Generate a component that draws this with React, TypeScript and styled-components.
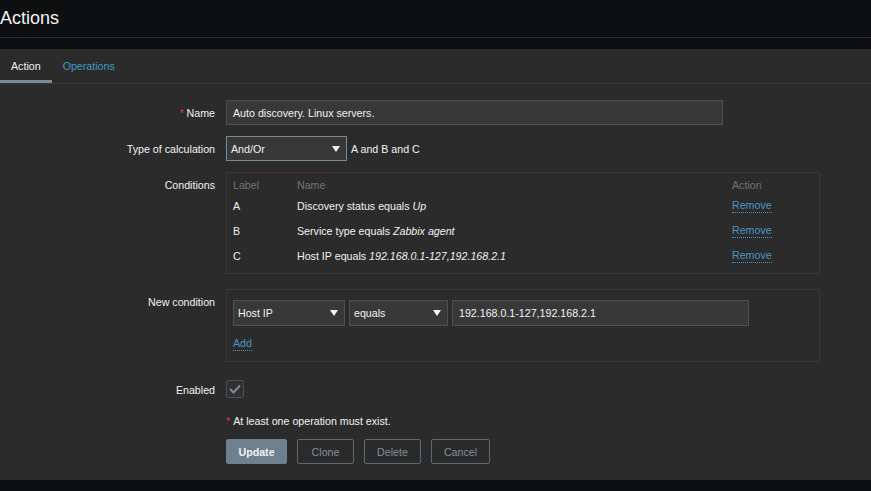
import React from 'react';
import styled, { createGlobalStyle } from 'styled-components';

const GlobalStyle = createGlobalStyle`
  html, body {
    margin: 0;
    padding: 0;
    background: #0e0f11;
  }
  body {
    font-family: "Liberation Sans", Arial, sans-serif;
    font-size: 10.67px;
    color: #f2f2f2;
  }
`;

const Page = styled.div`
  width: 871px;
  height: 491px;
  background: #0e0f11;
  display: flex;
  flex-direction: column;
  overflow: hidden;
`;

const Header = styled.header`
  height: 37px;
  border-bottom: 1px solid #2b2b2b;
  display: flex;
  align-items: center;
`;

const Title = styled.h1`
  margin: 0;
  font-size: 18px;
  font-weight: normal;
  color: #f2f2f2;
  line-height: 1;
  padding-bottom: 2px;
`;

const Panel = styled.main`
  margin-top: 11px;
  height: 431px;
  background: #2b2b2b;
`;

const TabBar = styled.nav`
  height: 34px;
  display: flex;
  border-bottom: 1px solid #383838;
`;

const Tab = styled.div<{ $active?: boolean }>`
  padding: 0 11px;
  display: flex;
  align-items: center;
  color: ${(p) => (p.$active ? '#f2f2f2' : '#4796c4')};
  border-bottom: 3px solid ${(p) => (p.$active ? '#768d99' : 'transparent')};
  height: 29px;
  padding-top: 2px;
`;

const Form = styled.div`
  padding-top: 16px;
`;

const Row = styled.div<{ $mt?: number }>`
  display: grid;
  grid-template-columns: 215px 1fr;
  column-gap: 11px;
  margin-top: ${(p) => p.$mt ?? 0}px;
`;

const Label = styled.div<{ $pt?: number }>`
  text-align: right;
  line-height: 14px;
  padding-top: ${(p) => p.$pt ?? 6}px;
  color: #f2f2f2;
`;

const Req = styled.span`
  color: #e33734;
  margin-right: 3px;
`;

const Field = styled.div`
  display: flex;
  align-items: center;
  gap: 4px;
`;

const TextInput = styled.div<{ $w: number; $h?: number }>`
  box-sizing: border-box;
  width: ${(p) => p.$w}px;
  height: ${(p) => p.$h ?? 25}px;
  background: #383838;
  border: 1px solid #4f4f4f;
  padding: 0 6px;
  display: flex;
  align-items: center;
  color: #f2f2f2;
`;

const Select = styled.div<{ $w: number; $h?: number; $focus?: boolean }>`
  box-sizing: border-box;
  width: ${(p) => p.$w}px;
  height: ${(p) => p.$h ?? 26}px;
  background: #383838;
  border: 1px solid ${(p) => (p.$focus ? '#768d99' : '#4f4f4f')};
  padding: 0 6px 0 4px;
  display: flex;
  align-items: center;
  justify-content: space-between;
  color: #f2f2f2;
`;

const Note = styled.span`
  color: #f2f2f2;
`;

const Box = styled.div<{ $w: number }>`
  box-sizing: border-box;
  width: ${(p) => p.$w}px;
  border: 1px solid #383838;
`;

const CondTable = styled(Box)`
  padding: 4px 6px 5px;
`;

const TRow = styled.div<{ $head?: boolean }>`
  display: grid;
  grid-template-columns: 64px 435px 1fr;
  height: ${(p) => (p.$head ? 16 : 25)}px;
  align-items: center;
  color: ${(p) => (p.$head ? '#737373' : '#f2f2f2')};
`;

const Link = styled.span`
  color: #4796c4;
  border-bottom: 1px dotted #4796c4;
  line-height: 13px;
  justify-self: start;
`;

const NewCond = styled(Box)`
  padding: 10px 6px 10px;
`;

const AddLine = styled.div`
  margin-top: 11px;
  height: 14px;
  display: flex;
  align-items: center;
`;

const Check = styled.div`
  box-sizing: border-box;
  width: 18px;
  height: 18px;
  background: #303030;
  border: 1px solid #4f4f4f;
  border-radius: 2px;
  display: flex;
  align-items: center;
  justify-content: center;
`;

const Warning = styled.div`
  line-height: 14px;
  color: #f2f2f2;
`;

const Buttons = styled.div`
  display: flex;
  gap: 10px;
`;

const Button = styled.button<{ $primary?: boolean; $w: number }>`
  box-sizing: border-box;
  width: ${(p) => p.$w}px;
  height: 25px;
  padding: 0;
  font-family: "Liberation Sans", Arial, sans-serif;
  font-size: 10.67px;
  border-radius: 2px;
  border: 1px solid ${(p) => (p.$primary ? '#6c818d' : '#5b6a73')};
  background: ${(p) => (p.$primary ? '#6c818d' : 'transparent')};
  color: ${(p) => (p.$primary ? '#f2f2f2' : '#7f8f99')};
  font-weight: ${(p) => (p.$primary ? 'bold' : 'normal')};
`;

const Arrow = () => (
  <svg width="8" height="6" viewBox="0 0 8 6">
    <polygon points="0,0 8,0 4,6" fill="#f2f2f2" />
  </svg>
);

const conditions = [
  { label: 'A', text: 'Discovery status equals ', val: 'Up' },
  { label: 'B', text: 'Service type equals ', val: 'Zabbix agent' },
  { label: 'C', text: 'Host IP equals ', val: '192.168.0.1-127,192.168.2.1' },
];

const App: React.FC = () => {
  return (
    <Page>
      <GlobalStyle />
      <Header>
        <Title>Actions</Title>
      </Header>
      <Panel>
        <TabBar>
          <Tab $active>Action</Tab>
          <Tab>Operations</Tab>
        </TabBar>
        <Form>
          <Row>
            <Label>
              <Req>*</Req>Name
            </Label>
            <Field>
              <TextInput $w={497}>Auto discovery. Linux servers.</TextInput>
            </Field>
          </Row>
          <Row $mt={11}>
            <Label>Type of calculation</Label>
            <Field>
              <Select $w={121} $h={25} $focus>
                And/Or
                <Arrow />
              </Select>
              <Note>A and B and C</Note>
            </Field>
          </Row>
          <Row $mt={11}>
            <Label $pt={6}>Conditions</Label>
            <div>
              <CondTable $w={594}>
                <TRow $head>
                  <span>Label</span>
                  <span>Name</span>
                  <span>Action</span>
                </TRow>
                {conditions.map((c) => (
                  <TRow key={c.label}>
                    <span>{c.label}</span>
                    <span>
                      {c.text}
                      <i>{c.val}</i>
                    </span>
                    <Link>Remove</Link>
                  </TRow>
                ))}
              </CondTable>
            </div>
          </Row>
          <Row $mt={15}>
            <Label $pt={6}>New condition</Label>
            <div>
              <NewCond $w={594}>
                <Field>
                  <Select $w={112}>
                    Host IP
                    <Arrow />
                  </Select>
                  <Select $w={99}>
                    equals
                    <Arrow />
                  </Select>
                  <TextInput $w={297} $h={26}>192.168.0.1-127,192.168.2.1</TextInput>
                </Field>
                <AddLine>
                  <Link>Add</Link>
                </AddLine>
              </NewCond>
            </div>
          </Row>
          <Row $mt={18}>
            <Label $pt={3}>Enabled</Label>
            <Field>
              <Check>
                <svg width="12" height="10" viewBox="0 0 12 10">
                  <polyline points="1,5 4.5,8.5 11,1.5" fill="none" stroke="#768d99" strokeWidth="2" />
                </svg>
              </Check>
            </Field>
          </Row>
          <Row $mt={16}>
            <div />
            <Warning>
              <Req>*</Req>At least one operation must exist.
            </Warning>
          </Row>
          <Row $mt={11}>
            <div />
            <Buttons>
              <Button $primary $w={61}>Update</Button>
              <Button $w={57}>Clone</Button>
              <Button $w={57}>Delete</Button>
              <Button $w={59}>Cancel</Button>
            </Buttons>
          </Row>
        </Form>
      </Panel>
    </Page>
  );
};

export default App;
